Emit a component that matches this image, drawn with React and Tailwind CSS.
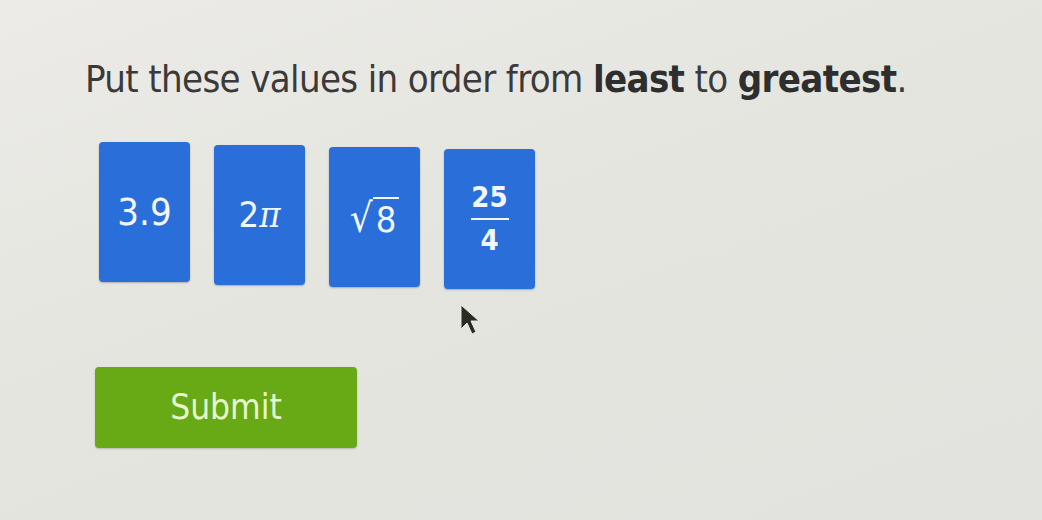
export default function App() {
  const tile =
    "w-[91px] h-[140px] rounded-[4px] bg-[#2a6fd9] flex items-center justify-center text-[#f2f6ff] shadow-[0_1px_2px_rgba(0,0,0,0.25)]";
  return (
    <div
      className="relative w-[1042px] h-[520px] overflow-hidden bg-[linear-gradient(160deg,#ecebe7_0%,#e5e5e0_45%,#e2e3de_100%)]"
      style={{ fontFamily: '"DejaVu Sans", Verdana, sans-serif' }}
    >
      <div className="pl-[85px] pt-[54px]">
        <h1 className="text-[38px] leading-[50px] text-[#3a3a3a] font-stretch-condensed tracking-[-0.65px] whitespace-nowrap">
          Put these values in order from <span className="font-bold text-[#2e2e2e]">least</span> to{" "}
          <span className="font-bold text-[#2e2e2e]">greatest</span>.
        </h1>

        <div className="flex items-start gap-[24px] pl-[14px] mt-[38px]">
          <div className={tile}>
            <span className="text-[38px] font-stretch-condensed">3.9</span>
          </div>
          <div className={`${tile} mt-[3px]`}>
            <span className="text-[36px] font-stretch-condensed">
              2<span style={{ fontFamily: '"DejaVu Serif", serif' }} className="italic">π</span>
            </span>
          </div>
          <div className={`${tile} mt-[5px]`}>
            <span className="flex items-end text-[36px] font-stretch-condensed">
              <span className="text-[40px] leading-none">√</span>
              <span className="border-t-[2px] border-[#f2f6ff] leading-none pt-[3px] px-[3px]">8</span>
            </span>
          </div>
          <div className={`${tile} mt-[7px]`}>
            <span className="flex flex-col items-center text-[29px] font-bold font-stretch-condensed leading-none">
              <span>25</span>
              <span className="w-[38px] h-[2px] bg-[#f2f6ff] my-[6px]" />
              <span>4</span>
            </span>
          </div>
        </div>

        <button className="mt-[78px] ml-[10px] w-[262px] h-[81px] rounded-[4px] bg-[#68a916] text-[#e6f6cf] text-[35px] font-stretch-condensed flex items-center justify-center shadow-[0_1px_2px_rgba(0,0,0,0.2)]">
          Submit
        </button>
      </div>

      <svg
        className="absolute left-[458px] top-[303px]"
        width="26"
        height="36"
        viewBox="0 0 26 36"
      >
        <path
          d="M3 2 L3 26 L9 20 L14 31 L18 29 L13 18 L21 18 Z"
          fill="#2b2b22"
          stroke="#e8e8e2"
          strokeWidth="1"
        />
      </svg>
    </div>
  );
}
